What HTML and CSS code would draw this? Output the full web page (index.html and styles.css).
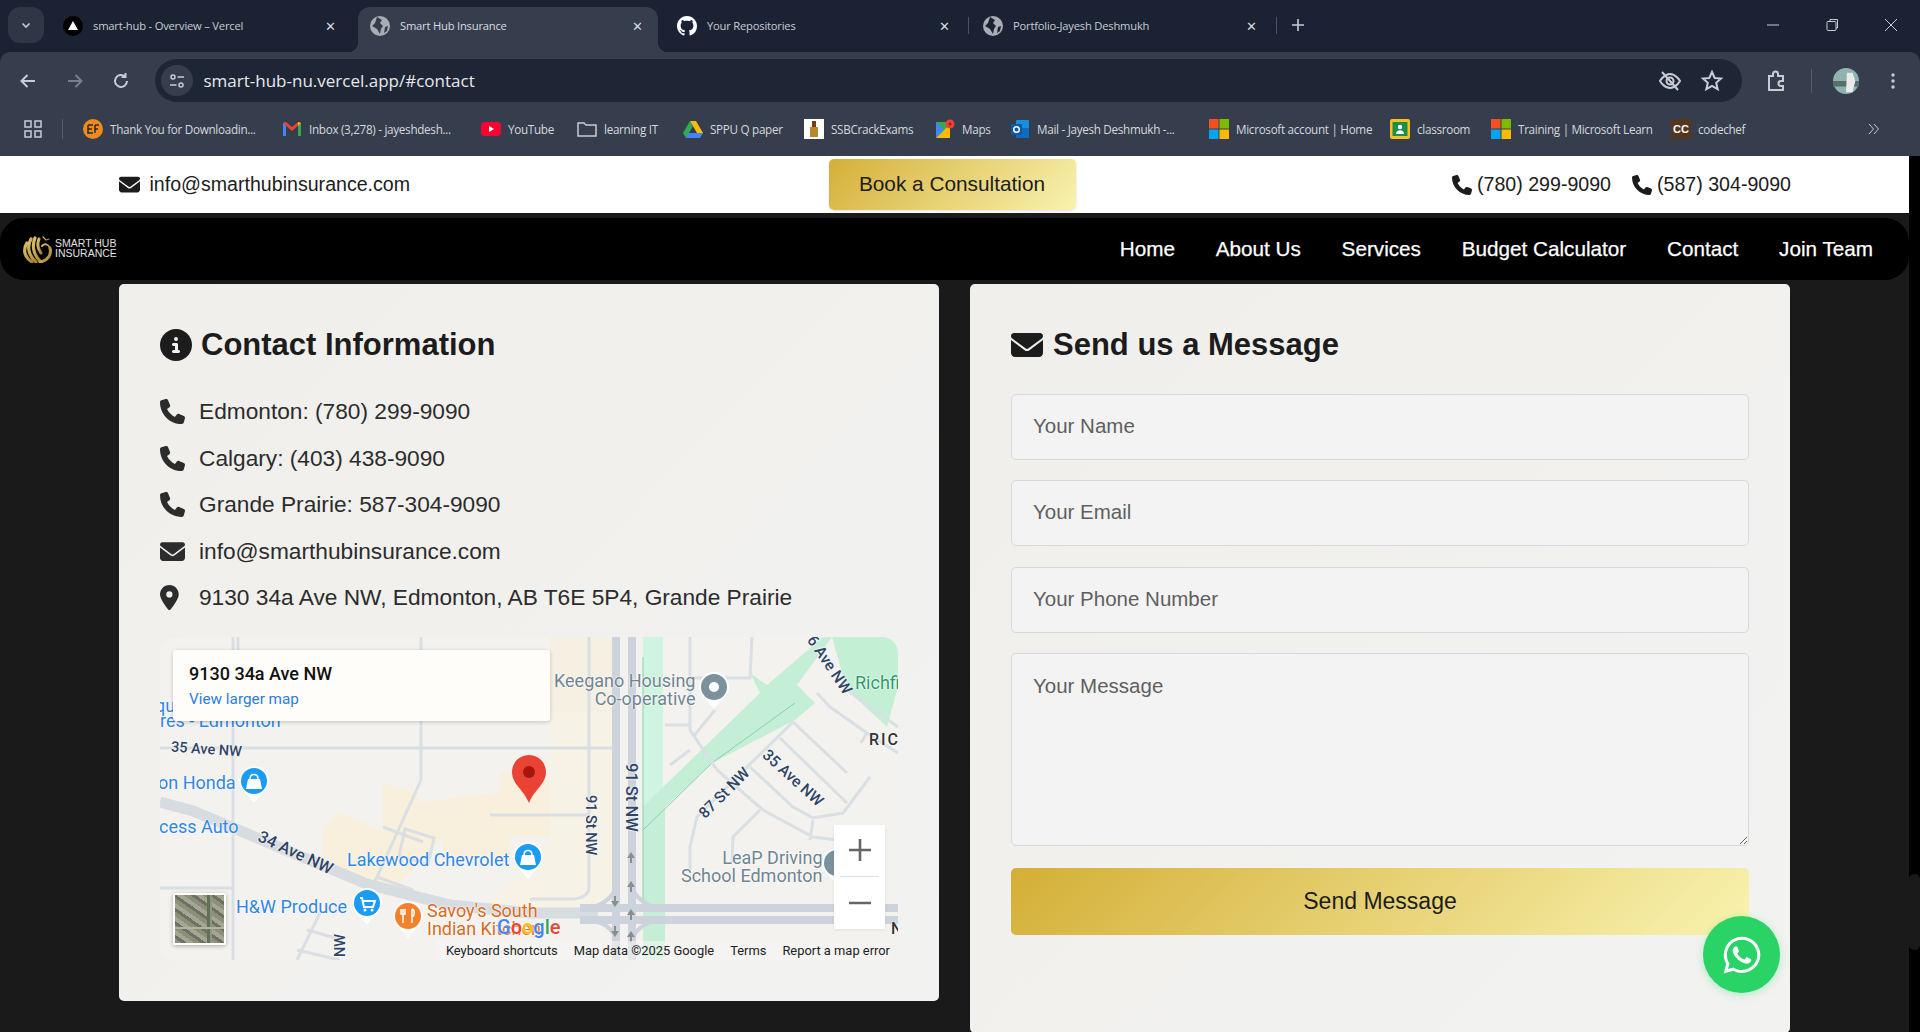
FILE: index.html
```html
<!DOCTYPE html>
<html lang="en">
<head>
<meta charset="utf-8">
<title>Smart Hub Insurance</title>
<link rel="stylesheet" href="styles.css">
</head>
<body>
<div class="chrome">
  <div class="tabstrip">
    <div class="tabsearch"><svg width="12" height="12" viewBox="0 0 12 12"><path d="M2.500 4.500 6 8l3.500-3.500" class="ic-line"/></svg></div>
    <div class="tab t1"><svg class="fav" viewBox="0 0 20 20"><circle cx="10" cy="10" r="10" fill="#000"/><path d="M10 5l5 9H5z" fill="#fff"/></svg><span class="tab-title">smart-hub - Overview – Vercel</span><span class="tab-x">✕</span></div>
    <div class="tab t2 active"><svg class="fav" viewBox="0 0 20 20"><circle cx="10" cy="10" r="10" fill="#a9adb5"/><path d="M7 1l5 3-2 3 3 3-2 3-1 5-3-5-5-3 3-3zM15 11l3-1-1 5-3 2z" fill="#363e4e"/></svg><span class="tab-title">Smart Hub Insurance</span><span class="tab-x">✕</span></div>
    <div class="tab t3"><svg class="fav" viewBox="0 0 16 16"><path fill="#fff" d="M8 0C3.580 0 0 3.580 0 8c0 3.540 2.290 6.530 5.470 7.590.4.070.55-.17.55-.38 0-.19-.01-.82-.01-1.490-2.010.37-2.530-.49-2.690-.94-.09-.23-.48-.94-.82-1.130-.28-.15-.68-.52-.01-.53.63-.01 1.080.58 1.230.82.72 1.210 1.870.87 2.330.66.07-.52.28-.87.51-1.070-1.780-.2-3.640-.89-3.640-3.950 0-.87.31-1.590.82-2.150-.08-.2-.36-1.020.08-2.120 0 0 .67-.21 2.200.82.64-.18 1.320-.27 2-.27s1.360.09 2 .27c1.530-1.040 2.200-.82 2.200-.82.44 1.100.16 1.920.08 2.120.51.56.82 1.270.82 2.150 0 3.070-1.870 3.750-3.650 3.950.29.25.54.73.54 1.480 0 1.070-.01 1.930-.01 2.200 0 .21.15.46.55.38A8.010 8.010 0 0 0 16 8c0-4.420-3.580-8-8-8z"/></svg><span class="tab-title">Your Repositories</span><span class="tab-x">✕</span></div>
    <i class="tab-sep s1"></i>
    <div class="tab t4"><svg class="fav" viewBox="0 0 20 20"><circle cx="10" cy="10" r="10" fill="#a9adb5"/><path d="M7 1l5 3-2 3 3 3-2 3-1 5-3-5-5-3 3-3zM15 11l3-1-1 5-3 2z" fill="#1a2233"/></svg><span class="tab-title">Portfolio-Jayesh Deshmukh</span><span class="tab-x">✕</span></div>
    <i class="tab-sep s2"></i>
    <svg class="newtab" width="14" height="14" viewBox="0 0 14 14"><path d="M7 1v12M1 7h12" class="ic-line"/></svg>
    <div class="winctl">
      <svg width="14" height="14" viewBox="0 0 14 14"><path d="M1 7h12" class="ic-thin"/></svg>
      <svg width="14" height="14" viewBox="0 0 14 14"><path d="M5 3V1.500h7.500V10H11" class="ic-thin"/><rect x="2" y="3.500" width="9" height="9" rx="1" class="ic-thin"/></svg>
      <svg width="14" height="14" viewBox="0 0 14 14"><path d="M1 1l12 12M13 1 1 13" class="ic-thin"/></svg>
    </div>
  </div>
  <div class="toolbar">
    <svg class="tb" viewBox="0 0 20 20"><path d="M17 10H4M9.500 4 3.500 10l6 6" class="ic-tool"/></svg>
    <svg class="tb dim" viewBox="0 0 20 20"><path d="M3 10h13M10.500 4l6 6-6 6" class="ic-tool"/></svg>
    <svg class="tb" viewBox="0 0 20 20"><path d="M16 10a6 6 0 1 1-2-4.500M14.500 2v4h-4" class="ic-tool"/></svg>
    <div class="omnibox">
      <div class="site-ic"><svg width="18" height="18" viewBox="0 0 18 18"><circle cx="5" cy="5" r="2" class="ic-thin2"/><path d="M9.500 5H16M2 13h6.500" class="ic-thin2"/><circle cx="13" cy="13" r="2" class="ic-thin2"/></svg></div>
      <span class="url">smart-hub-nu.vercel.app/#contact</span>
      <svg class="omni-r" viewBox="0 0 24 24"><path d="M2 12s4-7 10-7 10 7 10 7-4 7-10 7-10-7-10-7z" class="ic-tool"/><circle cx="12" cy="12" r="3.500" class="ic-tool"/><path d="M4 3l16 18" class="ic-tool"/></svg>
      <svg class="omni-r" viewBox="0 0 24 24"><path d="M12 3l2.700 6 6.300.6-4.800 4.200 1.500 6.400-5.700-3.400-5.700 3.400 1.500-6.400L3 9.600 9.300 9z" class="ic-tool"/></svg>
    </div>
    <svg class="ext" viewBox="0 0 24 24"><path d="M5 7h4V5a2.500 2.500 0 0 1 5 0v2h5v5h-2a2.500 2.500 0 0 0 0 5h2v4H5z" class="ic-tool"/></svg>
    <i class="tool-sep"></i>
    <svg class="avatar" viewBox="0 0 28 28"><circle cx="14" cy="14" r="14" fill="#8fb4b0"/><path d="M0 14h28v6H0z" fill="#566f6b"/><path d="M15 5h6l3 9-3 12h-7z" fill="#e8ebe8"/></svg>
    <svg class="dots" viewBox="0 0 20 20"><circle cx="10" cy="4" r="1.700"/><circle cx="10" cy="10" r="1.700"/><circle cx="10" cy="16" r="1.700"/></svg>
  </div>
  <div class="bookmarks">
    <svg class="apps" viewBox="0 0 18 18"><path d="M1 1h6v6H1zM11 1h6v6h-6zM1 11h6v6H1zM11 11h6v6h-6z" class="ic-thin2"/></svg>
    <i class="bm-sep"></i>
    <div class="bm w-ef"><svg class="bi" viewBox="0 0 20 20"><circle cx="10" cy="10" r="10" fill="#f18a1c"/><path d="M5 6h5M5 6v8h5M5 10h4M12 6v8M12 6h4M12 10h3" stroke="#2b2b2b" stroke-width="1.500" fill="none"/></svg><span>Thank You for Downloadin...</span></div>
    <div class="bm w-gm"><svg class="bi" viewBox="0 0 20 20"><path d="M1 17V4l3-1v14z" fill="#4285f4"/><path d="M19 17V4l-3-1v14z" fill="#34a853"/><path d="M1 4l3-1 6 5 6-5 3 1-9 8z" fill="#ea4335"/><path d="M16 3l3 1-3 3z" fill="#fbbc04"/></svg><span>Inbox (3,278) - jayeshdesh...</span></div>
    <div class="bm w-yt"><svg class="bi" viewBox="0 0 20 20"><rect x="0" y="3" width="20" height="14" rx="4" fill="#f03"/><path d="M8 7l5 3-5 3z" fill="#fff"/></svg><span>YouTube</span></div>
    <div class="bm w-lr"><svg class="bi" viewBox="0 0 20 20"><path d="M1 4h6l2 2h10v11H1z" class="ic-thin2"/></svg><span>learning IT</span></div>
    <div class="bm w-sp"><svg class="bi" viewBox="0 0 20 20"><path d="M7 2h6l7 12h-6z" fill="#fbbc04"/><path d="M7 2 0 14l3 5 7-12z" fill="#34a853"/><path d="M5 14h15l-3 5H3z" fill="#4285f4"/></svg><span>SPPU Q paper</span></div>
    <div class="bm w-ss"><svg class="bi" viewBox="0 0 20 20"><rect width="20" height="20" fill="#fff"/><rect x="8" y="2" width="4" height="6" fill="#7a3d12"/><rect x="6" y="8" width="8" height="10" fill="#b8862e"/></svg><span>SSBCrackExams</span></div>
    <div class="bm w-mp"><svg class="bi" viewBox="0 0 20 20"><path d="M1 3h14v16H1z" fill="#34a853"/><path d="M1 19 15 5v14z" fill="#fbbc04"/><path d="M1 3l8 8-8 8z" fill="#4285f4"/><circle cx="15" cy="5" r="4.500" fill="#ea4335"/><circle cx="15" cy="5" r="1.500" fill="#a51c12"/></svg><span>Maps</span></div>
    <div class="bm w-ml"><svg class="bi" viewBox="0 0 20 20"><rect x="6" y="1" width="13" height="17" rx="1" fill="#1490df"/><rect x="6" y="9" width="13" height="10" fill="#0f6cbd"/><rect x="1" y="5" width="11" height="11" rx="1" fill="#0a5aa8"/><circle cx="6.500" cy="10.500" r="2.800" fill="none" stroke="#fff" stroke-width="1.500"/></svg><span>Mail - Jayesh Deshmukh -...</span></div>
    <div class="bm w-ms"><svg class="bi" viewBox="0 0 20 20"><path fill="#f25022" d="M0 0h9.500v9.500H0z"/><path fill="#7fba00" d="M10.500 0H20v9.500h-9.500z"/><path fill="#00a4ef" d="M0 10.500h9.500V20H0z"/><path fill="#ffb900" d="M10.500 10.500H20V20h-9.500z"/></svg><span>Microsoft account | Home</span></div>
    <div class="bm w-cl"><svg class="bi" viewBox="0 0 20 20"><rect width="20" height="20" rx="2" fill="#f7c21c"/><rect x="2.500" y="3" width="15" height="14" fill="#1f8e4d"/><circle cx="10" cy="8" r="2.200" fill="#fff"/><path d="M6 15c0-5 8-5 8 0z" fill="#fff"/></svg><span>classroom</span></div>
    <div class="bm w-tr"><svg class="bi" viewBox="0 0 20 20"><path fill="#f25022" d="M0 0h9.500v9.500H0z"/><path fill="#7fba00" d="M10.500 0H20v9.500h-9.500z"/><path fill="#00a4ef" d="M0 10.500h9.500V20H0z"/><path fill="#ffb900" d="M10.500 10.500H20V20h-9.500z"/></svg><span>Training | Microsoft Learn</span></div>
    <div class="bm w-cc"><span class="cc">CC</span><span>codechef</span></div>
    <svg class="more" viewBox="0 0 14 14"><path d="M3 2l4.500 5L3 12M8 2l4.500 5L8 12" class="ic-thin"/></svg>
  </div>
</div>

<div class="page">
  <div class="topbar">
    <div class="topbar-mail"><svg class="i-mail" viewBox="0 0 512 512"><use href="#envelope"/></svg><span>info@smarthubinsurance.com</span></div>
    <a class="consult">Book a Consultation</a>
    <div class="topbar-phones">
      <span class="ph"><svg class="i-ph" viewBox="0 0 512 512"><use href="#phone"/></svg>(780) 299-9090</span>
      <span class="ph"><svg class="i-ph" viewBox="0 0 512 512"><use href="#phone"/></svg>(587) 304-9090</span>
    </div>
  </div>
  <nav class="nav">
    <div class="logo">
      <svg class="logo-mark" viewBox="0 0 30 28"><defs><linearGradient id="lg" x1="0" x2="1" y1="0" y2="1"><stop offset="0" stop-color="#dcc06a"/><stop offset="1" stop-color="#a5822f"/></linearGradient></defs><g fill="none" stroke="url(#lg)" stroke-linecap="round"><path d="M4 8C0 14 1 22 9 27" stroke-width="3.200"/><path d="M8 4C4 11 5 20 13 27" stroke-width="3.200"/><path d="M12 3c-3 7-2 16 5 23" stroke-width="3.200"/><path d="M16 4c-2 5-1 10 2 14" stroke-width="3"/><path d="M27 13c2 7-3 13-10 14" stroke-width="3"/><path d="M19 11c3-3 6-2 8 2" stroke-width="2"/><path d="M20 2l3 3 3-1" stroke-width="1.200"/></g></svg>
      <div class="logo-text"><span>SMART HUB</span><span>INSURANCE</span></div>
    </div>
    <div class="nav-links"><a>Home</a><a>About Us</a><a>Services</a><a>Budget Calculator</a><a>Contact</a><a>Join Team</a></div>
  </nav>

  <main class="contact">
    <section class="card info">
      <h2 class="card-h"><svg class="h-ic" viewBox="0 0 512 512"><path d="M256 512a256 256 0 1 0 0-512 256 256 0 1 0 0 512zM216 336h24v-64h-24c-13.300 0-24-10.700-24-24s10.700-24 24-24h48c13.300 0 24 10.700 24 24v88h8c13.300 0 24 10.700 24 24s-10.700 24-24 24h-80c-13.300 0-24-10.700-24-24s10.700-24 24-24zm40-208a32 32 0 1 1 0 64 32 32 0 1 1 0-64z"/></svg>Contact Information</h2>
      <ul class="rows">
        <li><svg class="r-ic" viewBox="0 0 512 512"><use href="#phone"/></svg>Edmonton: (780) 299-9090</li>
        <li><svg class="r-ic" viewBox="0 0 512 512"><use href="#phone"/></svg>Calgary: (403) 438-9090</li>
        <li><svg class="r-ic" viewBox="0 0 512 512"><use href="#phone"/></svg>Grande Prairie: 587-304-9090</li>
        <li><svg class="r-ic" viewBox="0 0 512 512"><use href="#envelope"/></svg>info@smarthubinsurance.com</li>
        <li><svg class="r-ic" viewBox="0 0 384 512" preserveAspectRatio="xMinYMid"><path d="M215.700 499.200C267 435 384 279.400 384 192 384 86 298 0 192 0S0 86 0 192c0 87.400 117 243 168.300 307.200 12.300 15.300 35.100 15.300 47.400 0zM192 128a64 64 0 1 1 0 128 64 64 0 1 1 0-128z"/></svg>9130 34a Ave NW, Edmonton, AB T6E 5P4, Grande Prairie</li>
      </ul>
      <div class="map">
        <svg class="map-art" viewBox="0 0 738 323">
          <rect width="738" height="323" fill="#f4f2ef"/>
          <path d="M163 190l17-15 43 20v-49l32 9 5 10 80-10v-20h30l20 10v55h-40v23h-67v-23l-43 46-40 0-37-20z" fill="#f8f0dc"/>
          <path d="M390 75h63v190l-30 10H320l70-70z" fill="#f7f2e6"/>
          <path d="M390 0h63v75h-63z" fill="#f6f0e2"/>
          <path d="M483 0h20v323h-20z" fill="#cff4df"/>
          <path d="M503 150l97-94-10-20 17 12 56-48h9l-35 48 18 18-20 17-83 43-47 44v150h-2l-20-1V170z" fill="#c4efd6"/>
          <path d="M672 0h66v50l-11 40-40-37z" fill="#c3efd5"/>
          <path d="M483 193 552 126l83-60M483 20v250" fill="none" stroke="#85d2ac" stroke-width="1"/>
          <g class="road-l">
            <path d="M0 111h456M73 0v323M78 0v20M261 0v143l-44 97-10 20"/>
            <path d="M0 251h72M160 276l-23 47M147 293l36 10M137 313l43 10"/>
            <path d="M429 0v250q0 10-15 12l-44 0"/>
            <path d="M530 0v93l27 40 46 40 50 27 50 6M530 41h60l2-41M505 88h25M533 100l22-27M510 128l20-15"/>
            <path d="M633 85l-46 45-50 50-7 30v23M633 85l54 51M620 101l67 65M590 130l43 40 20 11 30-5 27-36M657 56l13 14 37 26 31 20M683 50l55 40M600 173l-27 27-1 26M653 183l-3 20M707 96l-6 10"/>
            <path d="M245 192l29 9-6 26-29-8zM223 190l40 15M217 240l36 13M330 178h100"/>
          </g>
          <path d="M0 165l33 9 64 27 110 46 83 21 80 8h68" fill="none" stroke="#d6dcdf" stroke-width="11"/>
          <path d="M456 0v323M472 0v323" fill="none" stroke="#ccd3dc" stroke-width="8"/>
          <path d="M420 271h318M420 283h318" fill="none" stroke="#ccd3dc" stroke-width="8"/>
          <path d="M456 250q-5 15-25 21M472 250q5 15 25 21M456 303q-3-15-25-20M472 303q5-15 25-20" fill="none" stroke="#ccd3dc" stroke-width="4"/>
          <path d="M471 215l4 6h-3v5h-2v-5h-3zM471 244l4 6h-3v5h-2v-5h-3zM471 272l4 6h-3v5h-2v-5h-3zM471 294l4 6h-3v5h-2v-5h-3zM455 270l-4-6h3v-5h2v5h3zM455 300l-4-6h3v-5h2v5h3z" fill="#87908f"/>
        </svg>
        <span class="m bl ml-a">qu</span>
        <span class="m bl ml-b">res - Edmonton</span>
        <span class="m dk ml-c">35 Ave NW</span>
        <span class="m bl ml-d">on Honda</span>
        <span class="m bl ml-e">cess Auto</span>
        <span class="m dk ml-f">34 Ave NW</span>
        <span class="m bl ml-g">Lakewood Chevrolet</span>
        <span class="m bl ml-h">H&amp;W Produce</span>
        <span class="m or ml-i">Savoy's South<br>Indian Kitchen</span>
        <span class="m gy ml-j">Keegano Housing<br>Co-operative</span>
        <span class="m gn ml-k">Richfi</span>
        <span class="m dk2 ml-l">RIC</span>
        <span class="m dk v ml-m">91 St NW</span>
        <span class="m dk v ml-n">91 St NW</span>
        <span class="m dk ml-o">87 St NW</span>
        <span class="m dk ml-p">35 Ave NW</span>
        <span class="m dk ml-q">6 Ave NW</span>
        <span class="m gy ml-r">LeaP Driving<br>School Edmonton</span>
        <span class="m dk v2 ml-s">t NW</span>
        <span class="m dk2 ml-t">N</span>
        <svg class="mp p1" viewBox="0 0 32 38"><use href="#mappin"/><use href="#bag"/></svg>
        <svg class="mp p2" viewBox="0 0 32 38"><use href="#mappin"/><use href="#bag"/></svg>
        <svg class="mp p3" viewBox="0 0 32 38"><use href="#mappin"/><path d="M9 10h2l2 9h9l2-6H12" fill="none" stroke="#fff" stroke-width="2"/><circle cx="14" cy="22" r="1.500" fill="#fff"/><circle cx="21" cy="22" r="1.500" fill="#fff"/></svg>
        <svg class="mp p4" viewBox="0 0 32 38"><path d="M16 0a15 15 0 0 1 15 15c0 9-10 14-15 22C11 29 1 24 1 15A15 15 0 0 1 16 0z" fill="#fff"/><circle cx="16" cy="15" r="13" fill="#f3802b"/><path d="M11 8v14M9 8v5h4V8M20 8v14M20 8c3 1 3 6 0 8" stroke="#fff" stroke-width="1.500" fill="none"/></svg>
        <svg class="mp p5" viewBox="0 0 32 38"><path d="M16 0a15 15 0 0 1 15 15c0 9-10 14-15 22C11 29 1 24 1 15A15 15 0 0 1 16 0z" fill="#fff"/><circle cx="16" cy="15" r="13" fill="#7b919e"/><circle cx="16" cy="15" r="5" fill="#fff"/></svg>
        <svg class="mp p6" viewBox="0 0 32 38"><path d="M16 0a15 15 0 0 1 15 15c0 9-10 14-15 22C11 29 1 24 1 15A15 15 0 0 1 16 0z" fill="#fff"/><circle cx="16" cy="15" r="13" fill="#7b919e"/></svg>
        <svg class="redpin" viewBox="0 0 34 48"><path d="M17 0C7.600 0 0 7.600 0 17c0 12 12 18 17 31 5-13 17-19 17-31C34 7.600 26.400 0 17 0z" fill="#ea4335"/><circle cx="17" cy="17" r="6" fill="#a8150f"/></svg>
        <div class="map-card"><b>9130 34a Ave NW</b><a>View larger map</a></div>
        <div class="map-thumb"></div>
        <div class="zoomctl"><svg viewBox="0 0 24 24"><path d="M12 1v22M1 12h22"/></svg><i></i><svg viewBox="0 0 24 24"><path d="M1 12h22"/></svg></div>
        <div class="g-logo"><span class="gb">G</span><span class="gr">o</span><span class="gy2">o</span><span class="gb">g</span><span class="gg">l</span><span class="gr">e</span></div>
        <div class="map-foot"><span>Keyboard shortcuts</span><span>Map data ©2025 Google</span><span>Terms</span><span>Report a map error</span></div>
      </div>
    </section>

    <section class="card form">
      <h2 class="card-h"><svg class="h-ic" viewBox="0 0 512 512"><use href="#envelope"/></svg>Send us a Message</h2>
      <input class="field" type="text" placeholder="Your Name">
      <input class="field" type="email" placeholder="Your Email">
      <input class="field" type="tel" placeholder="Your Phone Number">
      <textarea class="field area" placeholder="Your Message"></textarea>
      <button class="send" type="button">Send Message</button>
    </section>
  </main>
  <div class="scrollbar"><div class="thumb"></div></div>
  <div class="wa"><svg viewBox="0 0 448 512"><path fill="#fff" d="M380.900 97.100C339 55.100 283.200 32 223.900 32c-122.400 0-222 99.600-222 222 0 39.100 10.200 77.300 29.600 111L0 480l117.700-30.900c32.400 17.700 68.900 27 106.100 27h.1c122.300 0 224.100-99.600 224.100-222 0-59.300-25.200-115-67.100-157zm-157 341.600c-33.200 0-65.700-8.900-94-25.700l-6.700-4-69.800 18.300L72 359.200l-4.400-7c-18.500-29.400-28.200-63.300-28.200-98.200 0-101.700 82.800-184.500 184.600-184.500 49.300 0 95.600 19.200 130.400 54.100 34.800 34.900 56.200 81.200 56.100 130.500 0 101.800-84.900 184.600-186.600 184.600zm101.200-138.200c-5.500-2.800-32.800-16.200-37.900-18-5.100-1.900-8.800-2.800-12.500 2.800-3.700 5.600-14.300 18-17.600 21.800-3.200 3.700-6.500 4.200-12 1.400-32.600-16.300-54-29.100-75.500-66-5.700-9.800 5.700-9.100 16.300-30.300 1.800-3.700.9-6.900-.5-9.700-1.400-2.800-12.500-30.100-17.100-41.200-4.500-10.800-9.100-9.300-12.500-9.500-3.200-.2-6.900-.2-10.600-.2-3.700 0-9.700 1.400-14.800 6.900-5.100 5.600-19.400 19-19.400 46.300 0 27.300 19.900 53.700 22.600 57.400 2.800 3.700 39.100 59.700 94.800 83.800 35.200 15.200 49 16.500 66.600 13.900 10.700-1.600 32.800-13.400 37.400-26.400 4.600-13 4.600-24.100 3.200-26.400-1.300-2.500-5-3.900-10.500-6.600z"/></svg></div>
</div>

<svg class="defs" width="0" height="0"><defs>
  <symbol id="phone" viewBox="0 0 512 512"><path d="M164.900 24.600c-7.700-18.600-28-28.500-47.400-23.200l-88 24C12.100 30.200 0 46 0 64c0 247.400 200.600 448 448 448 18 0 33.800-12.100 38.600-29.500l24-88c5.300-19.400-4.600-39.700-23.200-47.400l-96-40c-16.300-6.800-35.200-2.100-46.300 11.600L304.700 368C234.300 334.700 177.300 277.700 144 207.300l49.300-40.300c13.700-11.200 18.400-30 11.600-46.300l-40-96z"/></symbol>
  <symbol id="envelope" viewBox="0 0 512 512"><path d="M48 64C21.500 64 0 85.500 0 112c0 15.100 7.100 29.300 19.200 38.400l217.600 163.200c11.400 8.500 27 8.500 38.400 0l217.600-163.200c12.100-9.100 19.200-23.300 19.200-38.400 0-26.500-21.500-48-48-48H48zM0 176v208c0 35.300 28.700 64 64 64h384c35.300 0 64-28.700 64-64V176L294.400 339.200a64.100 64.100 0 0 1-76.800 0L0 176z"/></symbol>
  <symbol id="mappin" viewBox="0 0 32 38"><path d="M16 0a15 15 0 0 1 15 15c0 9-10 14-15 22C11 29 1 24 1 15A15 15 0 0 1 16 0z" fill="#fff"/><circle cx="16" cy="15" r="13" fill="#1a9bf5"/></symbol>
  <symbol id="bag" viewBox="0 0 32 38"><path d="M10 13h12l2 10H8z" fill="#fff"/><path d="M12 13c0-6 8-6 8 0" stroke="#fff" stroke-width="1.500" fill="none"/></symbol>
</defs></svg>
</body>
</html>
```
FILE: styles.css
```css
* { box-sizing: border-box; }
html, body { margin: 0; padding: 0; height: 1032px; overflow: hidden; background: #1a1a1a; }
body { font-family: "Liberation Sans", Arial, sans-serif; color: #222; }
.defs { position: absolute; }
.ic-line { fill: none; stroke: #c7ccd4; stroke-width: 1.600; }
.ic-thin { fill: none; stroke: #c7ccd4; stroke-width: 1; }
.ic-thin2 { fill: none; stroke: #c7ccd4; stroke-width: 1.500; }
.ic-tool { fill: none; stroke: #c7ccd4; stroke-width: 2; }

.chrome { height: 156px; background: #1a2233; font-family: "Open Sans", "Noto Sans", sans-serif; color: #d5d8dd; }
.tabstrip { height: 52px; display: flex; align-items: flex-start; padding: 7px 0 0 8px; }
.tabsearch { width: 36px; height: 36px; margin-right: 8px; background: #2f3746; border-radius: 12px; display: flex; align-items: center; justify-content: center; flex: none; }
.tab { height: 45px; display: flex; align-items: center; padding-bottom: 8px; font-size: 11.200px; position: relative; flex: none; color: #c9ccd2; letter-spacing: -.2px; }
.t1 { width: 306px; padding-left: 11px; padding-right: 20px; }
.t2 { width: 300px; padding-left: 12px; padding-right: 13px; }
.t3 { width: 308px; padding-left: 19px; padding-right: 14px; }
.t4 { width: 306px; padding-left: 14px; padding-right: 16px; }
.active { background: #363e4e; border-radius: 12px 12px 0 0; color: #d9dbe0; }
.active::before, .active::after { content: ""; position: absolute; bottom: 0; width: 10px; height: 10px; }
.active::before { left: -10px; background: radial-gradient(circle at 0 0, transparent 10px, #363e4e 10.500px); }
.active::after { right: -10px; background: radial-gradient(circle at 100% 0, transparent 10px, #363e4e 10.500px); }
.fav { width: 20px; height: 20px; flex: none; }
.tab-title { flex: 1; white-space: nowrap; overflow: hidden; padding-left: 10px; }
.tab-x { font-size: 13px; color: #d7dade; width: 16px; text-align: center; flex: none; }
.tab-sep { width: 1px; height: 17px; background: #4b5260; margin-top: 10px; flex: none; }
.s1 { margin-left: 2px; }
.s2 { margin-left: 1px; }
.newtab { margin: 11px 0 0 14px; flex: none; }
.winctl { margin-left: auto; display: flex; gap: 45px; padding: 11px 22px 0 0; }

.toolbar { height: 57px; display: flex; align-items: center; padding: 0 17px 0 18px; background: #363e4e; border-radius: 10px 10px 0 0; }
.tb { width: 20px; height: 20px; flex: none; margin-right: 26.500px; }
.tb.dim { opacity: .45; }
.omnibox { flex: 1; height: 43px; background: #1e2636; border-radius: 22px; margin-left: -3px; display: flex; align-items: center; padding: 0 18px 0 6px; }
.site-ic { width: 32px; height: 31px; border-radius: 16px; background: #363e4e; display: flex; align-items: center; justify-content: center; flex: none; }
.url { flex: 1; padding: 0 0 0 11px; font-size: 17px; color: #e7e9ec; }
.omni-r { width: 24px; height: 24px; margin-left: 18px; flex: none; }
.ext { width: 24px; height: 24px; margin-left: 22px; flex: none; }
.tool-sep { width: 1px; height: 24px; background: #555c6a; margin: 0 21px 0 23px; flex: none; }
.avatar { width: 26px; height: 26px; margin-right: 24px; flex: none; }
.dots { width: 20px; height: 20px; fill: #c7ccd4; flex: none; }

.bookmarks { height: 47px; display: flex; align-items: center; padding: 0 0 8px 24px; font-size: 11.700px; letter-spacing: -.3px; color: #d5d8dd; background: #363e4e; }
.apps { width: 18px; height: 18px; flex: none; }
.bm-sep { width: 1px; height: 20px; background: #555c6a; margin: 0 20px 0 20px; flex: none; }
.bm { display: flex; align-items: center; gap: 7px; white-space: nowrap; flex: none; }
.bi { width: 20px; height: 20px; flex: none; }
.w-ef { width: 199px; } .w-gm { width: 199px; } .w-yt { width: 96px; } .w-lr { width: 106px; }
.w-sp { width: 121px; } .w-ss { width: 131px; } .w-mp { width: 75px; } .w-ml { width: 199px; }
.w-ms { width: 181px; } .w-cl { width: 101px; } .w-tr { width: 180px; } .w-cc { width: 195px; }
.cc { width: 20px; height: 20px; background: #54361f; color: #fff; font: bold 11px "Liberation Sans", sans-serif; display: flex; align-items: center; justify-content: center; letter-spacing: 0; }
.more { width: 14px; height: 14px; flex: none; }

.page { height: 876px; position: relative; overflow: hidden; background: #1a1a1a; }
.topbar { height: 57px; background: #fff; display: grid; grid-template-columns: 710px 247px 1fr; align-items: center; padding: 0 118px 0 118.500px; width: 1909px; font-size: 19.600px; color: #1c1c1c; }
.topbar-mail, .topbar-phones, .ph { display: flex; align-items: center; }
.topbar-mail { gap: 10px; }
.topbar-phones { gap: 21px; justify-content: flex-end; }
.ph { gap: 5px; }
.i-mail { width: 21px; height: 21px; fill: #1c1c1c; flex: none; }
.i-ph { width: 20px; height: 20px; fill: #1c1c1c; flex: none; }
.consult { height: 51px; padding-bottom: 1px; border-radius: 5px; background: linear-gradient(135deg, #d4af37, #f9f3b0); display: flex; align-items: center; justify-content: center; color: #1c1c1c; font-size: 20.800px; box-shadow: 0 1px 3px rgba(0,0,0,.12); }
.nav { height: 62px; margin-top: 5px; width: 1909px; background: #000; border-radius: 24px; display: flex; align-items: center; justify-content: space-between; padding: 0 36px 0 23px; }
.logo { display: flex; align-items: center; gap: 2px; }
.logo-mark { width: 30px; height: 28px; }
.logo-text { display: flex; flex-direction: column; color: #e2e2e2; font-size: 10px; line-height: 10.500px; transform: scaleX(1.05); transform-origin: left; }
.nav-links { display: flex; gap: 40.800px; font-size: 20.700px; color: #fff; -webkit-text-stroke: .25px #fff; }

.contact { display: grid; grid-template-columns: 820px 820px; gap: 31px; padding: 4px 0 0 119px; width: 1909px; align-items: start; }
.card { background: linear-gradient(135deg, #f0efeb, #f2f2f1); border-radius: 5px; padding: 43px 41px 0; }
.info { height: 717px; }
.form { height: 749px; display: flex; flex-direction: column; }
.card-h { margin: 0 0 25.500px; font-size: 31px; line-height: 36px; color: #1c1c1c; display: flex; align-items: center; gap: 9px; }
.form .card-h { margin-bottom: 31px; gap: 10px; }
.h-ic { width: 32px; height: 32px; fill: #1c1c1c; flex: none; }
.rows { list-style: none; margin: 0; padding: 0; font-size: 22.700px; color: #2c2c2c; }
.rows li { display: flex; align-items: center; height: 46.500px; gap: 14px; }
.r-ic { width: 25px; height: 25px; fill: #2c2c2c; flex: none; }
.map { position: relative; margin-top: 15.500px; height: 323px; border-radius: 16px; overflow: hidden; background: #f4f2ef; }
.map-art { position: absolute; inset: 0; width: 100%; height: 100%; }
.road-l { fill: none; stroke: #d9dfe3; stroke-width: 3; }
.m { position: absolute; white-space: nowrap; font-family: Roboto, sans-serif; font-size: 18px; line-height: 18px; text-shadow: 0 0 2px #fff, 0 0 2px #fff; }
.bl { color: #2f86e8; }
.dk { color: #2f4466; font-size: 14.500px; font-weight: 500; }
.dk2 { color: #333; font-size: 16px; font-weight: 500; letter-spacing: 2px; }
.or { color: #d96a1d; }
.gy { color: #6f8592; text-align: right; }
.gn { color: #2f9a6c; }
.ml-a { left: -5px; top: 60px; }
.ml-b { left: 0; top: 75px; }
.ml-c { left: 11px; top: 104px; transform: rotate(4deg); }
.ml-d { left: -2px; top: 137px; }
.ml-e { left: -1px; top: 181px; }
.ml-f { left: 95px; top: 207px; font-size: 16.500px; transform: rotate(25deg); }
.ml-g { left: 187px; top: 214px; }
.ml-h { left: 76px; top: 261px; }
.ml-i { left: 267px; top: 265px; }
.ml-j { left: 394px; top: 35px; }
.ml-k { left: 695px; top: 37px; }
.ml-l { left: 709px; top: 94px; }
.ml-m { left: 421px; top: 158px; }
.ml-n { left: 462px; top: 126px; font-size: 16.500px; }
.ml-o { left: 532px; top: 147px; font-size: 15.500px; transform: rotate(-45deg); }
.ml-p { left: 595px; top: 132px; font-size: 15.500px; transform: rotate(42deg); }
.ml-q { left: 636px; top: 19px; font-size: 15.500px; transform: rotate(56deg); }
.ml-r { left: 521px; top: 212px; }
.ml-s { left: 172px; top: 297px; }
.ml-t { left: 731px; top: 283px; }
.v { writing-mode: vertical-rl; }
.v2 { writing-mode: vertical-rl; transform: rotate(180deg); }
.mp { position: absolute; width: 32px; height: 38px; }
.p1 { left: 78px; top: 129px; }
.p2 { left: 352px; top: 205px; }
.p3 { left: 191px; top: 251px; }
.p4 { left: 232px; top: 264px; }
.p5 { left: 538px; top: 35px; }
.p6 { left: 661px; top: 211px; }
.redpin { position: absolute; left: 352px; top: 118px; width: 34px; height: 48px; }
.map-card { position: absolute; left: 13px; top: 13px; width: 377px; height: 71px; background: #fffdf9; border-radius: 3px; box-shadow: 0 1px 4px rgba(0,0,0,.2); padding: 14px 16px; font-family: Roboto, sans-serif; display: flex; flex-direction: column; gap: 7px; }
.map-card b { font-size: 18px; line-height: 20px; font-weight: 500; color: #111; }
.map-card a { font-size: 15.300px; line-height: 17px; color: #2b7de0; }
.map-thumb { position: absolute; left: 13px; top: 256px; width: 53px; height: 52px; border: 2px solid #fff; border-radius: 2px; background: linear-gradient(0deg, transparent 30%, #b4b3a2 30% 34%, transparent 34%), linear-gradient(90deg, transparent 66%, #5f7350 66% 72%, #90938a 72% 76%, transparent 76%), repeating-linear-gradient(35deg, #8d8f79 0 4px, #6b7263 4px 7px, #a5a594 7px 11px); box-shadow: 0 1px 4px rgba(0,0,0,.3); }
.zoomctl { position: absolute; left: 674px; top: 188px; width: 51px; height: 104px; background: #fff; display: flex; flex-direction: column; align-items: center; justify-content: space-between; padding: 13px 0 14px; box-shadow: 0 1px 3px rgba(0,0,0,.08); }
.zoomctl svg { width: 24px; height: 24px; fill: none; stroke: #666; stroke-width: 2.600; }
.zoomctl i { width: 39px; height: 1px; background: #ddd; }
.g-logo { position: absolute; left: 337px; top: 280px; font: 500 20px/20px Roboto, sans-serif; text-shadow: 0 0 2px #fff; }
.gb { color: #4285f4; } .gr { color: #ea4335; } .gy2 { color: #fbbc04; } .gg { color: #34a853; }
.map-foot { position: absolute; right: 8px; bottom: -1px; display: flex; gap: 16px; font: 12.900px/20px Roboto, sans-serif; color: #222; background: rgba(245,245,245,.55); padding-left: 10px; }

.field { display: block; width: 100%; height: 66px; margin: 0 0 20.300px; background: #f3f3f3; border: 1px solid #d8d8d8; border-radius: 5px; padding: 0 21px 2px; font: 20.500px "Liberation Sans", sans-serif; color: #333; flex: none; }
.field::placeholder { color: #5f5f5f; opacity: 1; }
.area { height: 193px; padding-top: 20px; margin-bottom: 22px; }
.send { height: 67px; width: 100%; border: 0; border-radius: 5px; background: linear-gradient(135deg, #d4af37, #f9f3b0); font: 23px "Liberation Sans", sans-serif; color: #1c1c1c; flex: none; }
.scrollbar { position: absolute; right: 0; top: 0; bottom: 0; width: 11px; background: #000; padding-top: 718px; }
.thumb { height: 76px; background: #1a1a1a; border-radius: 5px; }
.wa { position: absolute; left: 1703px; top: 760px; width: 77px; height: 77px; border-radius: 50%; background: #29d366; box-shadow: 0 2px 8px rgba(41,211,102,.3); display: flex; align-items: center; justify-content: center; }
.wa svg { width: 42px; height: 42px; }
```
